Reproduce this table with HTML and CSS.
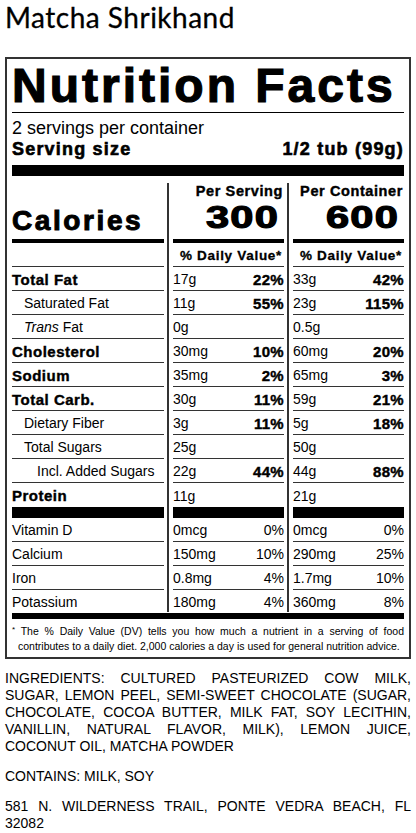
FILE: index.html
```html
<!DOCTYPE html>
<html lang="en">
<head>
  <meta charset="UTF-8">
  <meta name="viewport" content="width=device-width, initial-scale=1.0">
  <title>Matcha Shrikhand</title>
  <link rel="stylesheet" href="styles.css">
</head>
<body>
  <h1 class="product-name">Matcha Shrikhand</h1>

  <div class="label">
    <h2 class="label-title">Nutrition Facts</h2>
    <div class="servings">
      <div>2 servings per container</div>
      <div class="serving-size">
        <span>Serving size</span>
        <span>1/2 tub (99g)</span>
      </div>
    </div>

    <div class="facts" id="facts">
      <div class="cell head cal-label"><span class="calories">Calories</span></div>
      <div class="cell head"><span class="per">Per Serving</span><span class="cal-num">300</span></div>
      <div class="cell head"><span class="per">Per Container</span><span class="cal-num">600</span></div>
      <div class="cell"></div>
      <div class="cell dv-head">% Daily Value*</div>
      <div class="cell dv-head">% Daily Value*</div>
    </div>
    <div class="facts-end"></div>

    <p class="footnote"><span class="star">*</span> The % Daily Value (DV) tells you how much a nutrient in a serving of food contributes to a daily diet. 2,000 calories a day is used for general nutrition advice.</p>
  </div>

  <div class="info">
    <p>INGREDIENTS: CULTURED PASTEURIZED COW MILK, SUGAR, LEMON PEEL, SEMI-SWEET CHOCOLATE (SUGAR, CHOCOLATE, COCOA BUTTER, MILK FAT, SOY LECITHIN, VANILLIN, NATURAL FLAVOR, MILK), LEMON JUICE, COCONUT OIL, MATCHA POWDER</p>
    <p>CONTAINS: MILK, SOY</p>
    <p>581 N. WILDERNESS TRAIL, PONTE VEDRA BEACH, FL 32082</p>
  </div>

  <script>
    // Nutrient rows: [name, style, per serving, per container]
    const nutrients = [
      ['Total Fat', 'bold', ['17g', '22%'], ['33g', '42%']],
      ['Saturated Fat', 'sub', ['11g', '55%'], ['23g', '115%']],
      ['<i>Trans</i> Fat', 'sub', ['0g', ''], ['0.5g', '']],
      ['Cholesterol', 'bold', ['30mg', '10%'], ['60mg', '20%']],
      ['Sodium', 'bold', ['35mg', '2%'], ['65mg', '3%']],
      ['Total Carb.', 'bold', ['30g', '11%'], ['59g', '21%']],
      ['Dietary Fiber', 'sub', ['3g', '11%'], ['5g', '18%']],
      ['Total Sugars', 'sub', ['25g', ''], ['50g', '']],
      ['Incl. Added Sugars', 'subsub', ['22g', '44%'], ['44g', '88%']],
      ['Protein', 'bold protein', ['11g', ''], ['21g', '']],
      ['Vitamin D', 'vit', ['0mcg', '0%'], ['0mcg', '0%']],
      ['Calcium', 'vit', ['150mg', '10%'], ['290mg', '25%']],
      ['Iron', 'vit', ['0.8mg', '4%'], ['1.7mg', '10%']],
      ['Potassium', 'vit last', ['180mg', '4%'], ['360mg', '8%']]
    ];

    const facts = document.getElementById('facts');

    function valueCell(value, style) {
      return `<div class="cell ${style}">
        <span class="amount">${value[0]}</span>
        <span class="pct">${value[1]}</span>
      </div>`;
    }

    function renderFacts() {
      const html = nutrients.map(([name, style, serving, container]) => `
        <div class="cell ${style}"><span class="name">${name}</span></div>
        ${valueCell(serving, style)}
        ${valueCell(container, style)}
      `).join('');
      facts.insertAdjacentHTML('beforeend', html);
    }

    renderFacts();
  </script>
</body>
</html>
```

FILE: styles.css
```css
* {
  margin: 0;
  padding: 0;
  box-sizing: border-box;
}

body {
  font-family: 'Liberation Sans', Arial, sans-serif;
  color: #000;
  background: #fff;
  padding: 0 5px;
}

.product-name {
  font-family: Lato, sans-serif;
  font-weight: 400;
  font-size: 28px;
  line-height: normal;
  letter-spacing: 0.5px;
  -webkit-text-stroke: 0.3px #000;
  margin-bottom: 23px;
}

.label {
  border: 2px solid #333;
  padding: 3px 5px;
}

.label-title {
  font-size: 48px;
  line-height: 48px;
  font-weight: 700;
  letter-spacing: 3px;
  -webkit-text-stroke: 1.2px #000;
  white-space: nowrap;
  padding-bottom: 2px;
  border-bottom: 1px solid #000;
}

.servings {
  font-size: 18px;
  line-height: 21px;
  padding: 5px 0 5px;
  border-bottom: 11px solid #000;
}

.serving-size {
  display: flex;
  justify-content: space-between;
  font-weight: 700;
  letter-spacing: 1.2px;
  -webkit-text-stroke: 0.6px #000;
}

/* three columns, vertical rules drawn in the gaps */
.facts {
  display: grid;
  grid-template-columns: 152px 111px 111px;
  column-gap: 9px;
  margin-top: 7px;
  background:
    linear-gradient(#333, #333) 155px 0 / 2px 100% no-repeat,
    linear-gradient(#333, #333) 275px 0 / 2px 100% no-repeat;
}

.cell {
  height: 24px;
  border-bottom: 1px solid #333;
  display: flex;
  align-items: center;
  justify-content: space-between;
  font-size: 14px;
  padding-top: 1px;
}

.cell.head {
  height: 60px;
  border-bottom: 4px solid #000;
  flex-direction: column;
  align-items: flex-end;
  justify-content: flex-start;
  padding-top: 0;
}

.cell.cal-label {
  align-items: flex-start;
  justify-content: flex-end;
  padding-bottom: 4px;
}

.calories {
  font-size: 28px;
  line-height: 28px;
  font-weight: 700;
  letter-spacing: 2.6px;
  -webkit-text-stroke: 1px #000;
}

.per {
  font-size: 14.5px;
  line-height: 17px;
  font-weight: 700;
  letter-spacing: 0.6px;
  -webkit-text-stroke: 0.4px #000;
  padding-right: 1px;
}

.cal-num {
  display: inline-block;
  font-size: 32px;
  line-height: 31px;
  font-weight: 700;
  letter-spacing: 1px;
  -webkit-text-stroke: 1.2px #000;
  transform: scaleX(1.3);
  transform-origin: right center;
  margin-top: 2px;
  padding-right: 4px;
}

.dv-head {
  justify-content: flex-end;
  font-size: 13.5px;
  font-weight: 700;
  letter-spacing: 0.7px;
  -webkit-text-stroke: 0.3px #000;
  padding-right: 2px;
}

.bold .name {
  font-size: 15px;
  font-weight: 700;
  letter-spacing: 0.5px;
  -webkit-text-stroke: 0.4px #000;
}

.sub .name {
  padding-left: 12px;
}

.subsub .name {
  padding-left: 25px;
}

.pct {
  font-size: 15px;
  font-weight: 700;
  letter-spacing: 0.3px;
  -webkit-text-stroke: 0.4px #000;
}

.vit .pct {
  font-size: 14px;
  font-weight: 400;
  letter-spacing: 0;
  -webkit-text-stroke: 0;
}

.cell.protein {
  height: 35px;
  border-bottom: 11px solid #000;
}

.cell.last {
  height: 22px;
  border-bottom: none;
}

.facts-end {
  height: 6px;
  background: #000;
  margin-top: 1px;
}

.footnote {
  font-size: 10.5px;
  line-height: 15px;
  text-align: justify;
  padding: 3px 0 0 6px;
  text-indent: -6px;
}

.star {
  font-size: 8px;
  vertical-align: 3px;
}

.info {
  padding-top: 11px;
}

.info p {
  font-size: 14px;
  line-height: 17px;
  text-align: justify;
  margin-bottom: 13px;
}
```
